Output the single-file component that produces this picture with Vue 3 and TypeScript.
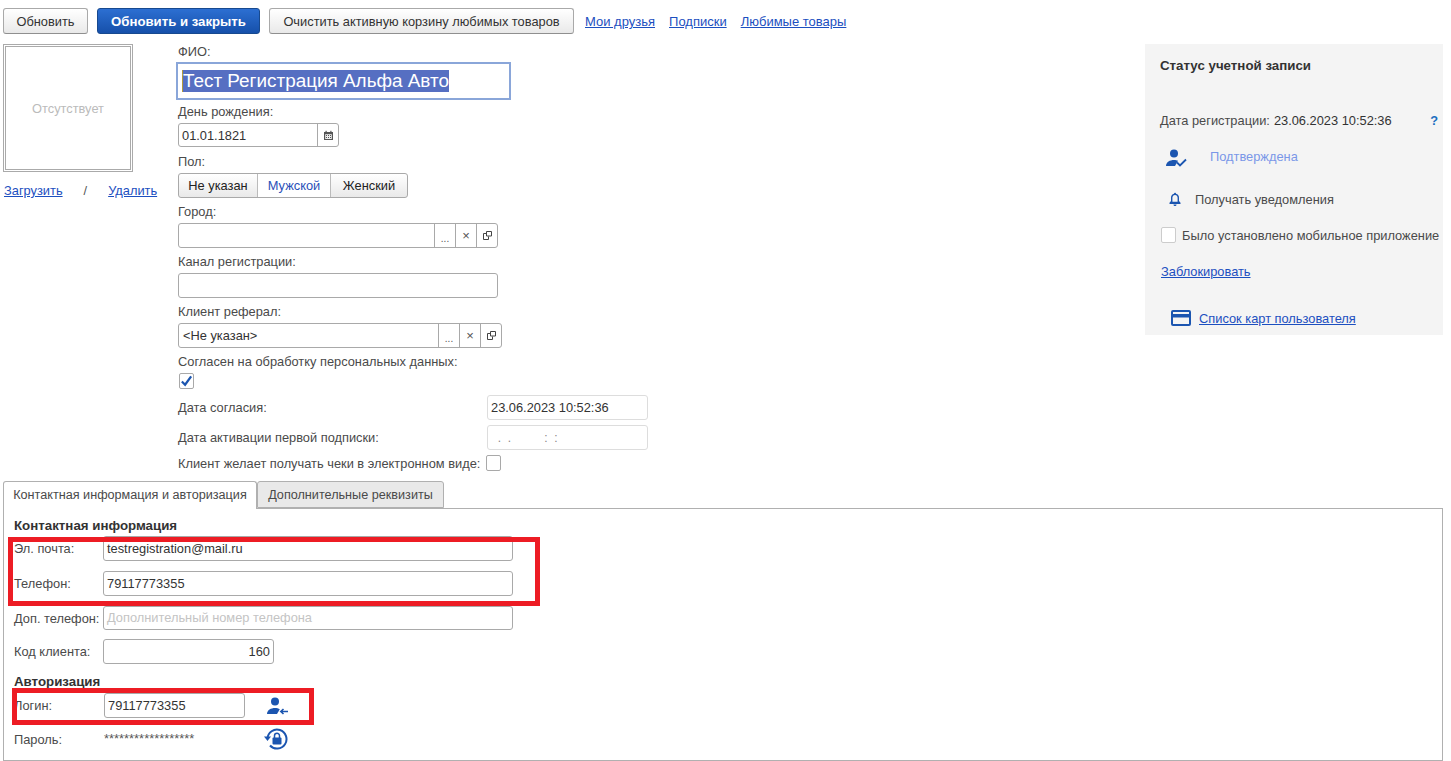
<script setup lang="ts">
const toolbarLinks: string[] = ['Мои друзья', 'Подписки', 'Любимые товары']
</script>

<template>
  <div class="page">
    <div class="toolbar">
      <button class="btn btn-plain">Обновить</button>
      <button class="btn btn-primary">Обновить и закрыть</button>
      <button class="btn btn-clear">Очистить активную корзину любимых товаров</button>
      <div class="toolbar-links">
        <a v-for="l in toolbarLinks" :key="l" class="link">{{ l }}</a>
      </div>
    </div>

    <div class="main">
      <div class="photo-col">
        <div class="photo"><span>Отсутствует</span></div>
        <div class="photo-links">
          <a class="link">Загрузить</a>
          <span class="slash">/</span>
          <a class="link">Удалить</a>
        </div>
      </div>

      <div class="form-col">
        <div class="lbl lbl-first">ФИО:</div>
        <div class="fio"><span class="fio-sel">Тест Регистрация Альфа Авто</span></div>
        <div class="lbl lbl-bd">День рождения:</div>
        <div class="ctl ctl-date">
          <span class="ctl-text">01.01.1821</span>
          <span class="ctl-btn">
            <svg width="11" height="11" viewBox="0 0 11 11">
              <rect x="1" y="2" width="9" height="8" fill="#555" />
              <rect x="2.2" y="4.2" width="6.6" height="4.8" fill="#eee" />
              <rect x="2.5" y="0.8" width="1.2" height="2" fill="#555" />
              <rect x="7.3" y="0.8" width="1.2" height="2" fill="#555" />
              <path d="M3 5h1v1H3zM5 5h1v1H5zM7 5h1v1H7zM3 7h1v1H3zM5 7h1v1H5zM7 7h1v1H7z" fill="#555" />
            </svg>
          </span>
        </div>
        <div class="lbl lbl-sex">Пол:</div>
        <div class="segment">
          <span class="seg seg-a">Не указан</span>
          <span class="seg seg-b">Мужской</span>
          <span class="seg seg-c">Женский</span>
        </div>
        <div class="lbl">Город:</div>
        <div class="ctl ctl-w320">
          <span class="ctl-text"></span>
          <span class="ctl-btn dots">...</span>
          <span class="ctl-btn cross">×</span>
          <span class="ctl-btn">
            <svg width="9" height="9" viewBox="0 0 9 9" fill="none" stroke="#444"><path d="M3.500 .5h5v4.500h-5z" /><path d="M3 2.500H.5v6h5V5.500" /></svg>
          </span>
        </div>
        <div class="lbl">Канал регистрации:</div>
        <div class="ctl ctl-w320"></div>
        <div class="lbl">Клиент реферал:</div>
        <div class="ctl ctl-w324">
          <span class="ctl-text ctl-text-tight">&lt;Не указан&gt;</span>
          <span class="ctl-btn dots">...</span>
          <span class="ctl-btn cross">×</span>
          <span class="ctl-btn">
            <svg width="9" height="9" viewBox="0 0 9 9" fill="none" stroke="#444"><path d="M3.500 .5h5v4.500h-5z" /><path d="M3 2.500H.5v6h5V5.500" /></svg>
          </span>
        </div>
        <div class="lbl">Согласен на обработку персональных данных:</div>
        <div class="check check-on">
          <svg width="14" height="14" viewBox="0 0 14 14"><path d="M2 7.500L5.500 11 12 2" fill="none" stroke="#1b55b0" stroke-width="2.400" /></svg>
        </div>
        <div class="row row-consent">
          <span class="row-lbl">Дата согласия:</span>
          <div class="ctl ctl-soft"><span class="ctl-text">23.06.2023 10:52:36</span></div>
        </div>
        <div class="row row-activation">
          <span class="row-lbl">Дата активации первой подписки:</span>
          <div class="ctl ctl-soft"><span class="ctl-text ctl-mask">&nbsp;&nbsp;.&nbsp;&nbsp;.&nbsp;&nbsp;&nbsp;&nbsp;&nbsp;&nbsp;&nbsp;&nbsp;&nbsp;&nbsp;:&nbsp;&nbsp;:</span></div>
        </div>
        <div class="row-receipt">
          <span>Клиент желает получать чеки в электронном виде:</span>
          <div class="check"></div>
        </div>
      </div>

      <aside class="status">
        <div class="status-title">Статус учетной записи</div>
        <div class="status-date">
          <span class="status-date-lbl">Дата регистрации:</span>
          <span class="status-date-val">23.06.2023 10:52:36</span>
          <span class="help">?</span>
        </div>
        <div class="status-confirm">
          <svg class="ic-user" width="21" height="18" viewBox="0 0 21 18">
            <circle cx="8" cy="4.500" r="4" fill="#1b55b0" />
            <path d="M0 17c0-4 4-6 8-6 1.500 0 3 .3 4 .8L9 17z" fill="#1b55b0" />
            <path d="M11 13.500l3 3 6-6" fill="none" stroke="#1b55b0" stroke-width="1.800" />
          </svg>
          <span class="confirm-text">Подтверждена</span>
        </div>
        <div class="status-notify">
          <svg width="14" height="14" viewBox="0 0 14 14">
            <path d="M7 .8c.6 0 1 .4 1 .9 2 .5 3 2 3 4v3.300l1.500 1.800V12h-11v-1.200L3 9V5.700c0-2 1-3.500 3-4 0-.5.4-.9 1-.9z" fill="#1b55b0" />
            <path d="M4.400 9.800V5.800c0-1.700 1.100-2.900 2.600-2.900s2.600 1.200 2.600 2.900v4z" fill="#f4f4f4" />
            <path d="M5.500 12.500h3c0 1-.7 1.500-1.500 1.500s-1.500-.5-1.500-1.500z" fill="#1b55b0" />
          </svg>
          <span>Получать уведомления</span>
        </div>
        <div class="status-mobile">
          <div class="check check-light"></div>
          <span>Было установлено мобильное приложение</span>
        </div>
        <a class="link status-block">Заблокировать</a>
        <div class="status-cards">
          <svg width="20" height="16" viewBox="0 0 20 16">
            <rect width="20" height="16" rx="2" fill="#1b55b0" />
            <rect x="2" y="2" width="16" height="2" fill="#f4f4f4" />
            <rect x="2" y="7.500" width="16" height="6.500" fill="#f4f4f4" />
          </svg>
          <a class="link">Список карт пользователя</a>
        </div>
      </aside>
    </div>

    <div class="tabs">
      <div class="tab tab-active">Контактная информация и авторизация</div>
      <div class="tab tab-idle">Дополнительные реквизиты</div>
    </div>
    <div class="panel">
      <div class="section-title">Контактная информация</div>
      <div class="p-row p-mail">
        <span class="p-lbl">Эл. почта:</span>
        <div class="ctl p-wide"><span class="ctl-text">testregistration@mail.ru</span></div>
      </div>
      <div class="p-row p-phone">
        <span class="p-lbl">Телефон:</span>
        <div class="ctl p-wide"><span class="ctl-text">79117773355</span></div>
      </div>
      <div class="p-row p-extra">
        <span class="p-lbl">Доп. телефон:</span>
        <div class="ctl p-wide ctl-extra"><span class="ctl-text placeholder">Дополнительный номер телефона</span></div>
      </div>
      <div class="p-row p-code">
        <span class="p-lbl">Код клиента:</span>
        <div class="ctl p-code-ctl"><span class="ctl-text code-val">160</span></div>
      </div>
      <div class="section-title section-auth">Авторизация</div>
      <div class="p-row p-login">
        <span class="p-lbl p-lbl-login">Логин:</span>
        <div class="ctl p-login-ctl"><span class="ctl-text">79117773355</span></div>
        <svg class="ic-login" width="22" height="18" viewBox="0 0 22 18">
          <circle cx="8" cy="4.500" r="4" fill="#1b55b0" />
          <path d="M0 17c0-4 4-6 8-6 1.800 0 3.500.4 4.800 1.200L10 17z" fill="#1b55b0" />
          <path d="M21 14.500h-7M16.500 12l-2.700 2.500 2.700 2.500" fill="none" stroke="#1b55b0" stroke-width="1.600" />
        </svg>
      </div>
      <div class="p-row p-pass">
        <span class="p-lbl">Пароль:</span>
        <span class="stars">******************</span>
        <svg class="ic-pass" width="24" height="22" viewBox="0 0 24 22">
          <path d="M3.500 10.500A9.500 9.500 0 1 1 6 17.500" fill="none" stroke="#1b55b0" stroke-width="2" />
          <path d="M0 8.500h7L3.500 13z" fill="#1b55b0" />
          <rect x="8.500" y="9.500" width="9" height="7" rx="1" fill="#1b55b0" />
          <path d="M10.500 10V7.800a2.500 2.500 0 0 1 5 0V10" fill="none" stroke="#1b55b0" stroke-width="1.500" />
        </svg>
      </div>
      <div class="annot annot-a"></div>
      <div class="annot annot-b"></div>
    </div>
  </div>
</template>

<style>
html, body { margin: 0; background: #fff; }
</style>

<style scoped>
.page { width: 1451px; height: 761px; overflow: hidden; font-family: "Liberation Sans", Arial, sans-serif; font-size: 12.83px; color: #4a4a4a; box-sizing: border-box; position: relative; }
.toolbar { display: flex; align-items: center; height: 26px; margin-top: 8px; padding-left: 3px; }
.btn { font: inherit; height: 26px; box-sizing: border-box; border: 1px solid #a9a9a9; border-bottom-color: #8f8f8f; border-radius: 3px; background: linear-gradient(#fff, #e9e9e9); color: #333; padding: 1px 0 0; margin-right: 9px; }
.btn-plain { width: 85px; }
.btn-primary { width: 163px; background: linear-gradient(#2c6fd2, #1650aa); border-color: #17498f; color: #fff; font-weight: 700; font-size: 13.2px; }
.btn-clear { width: 305px; margin-right: 11px; }
.toolbar-links { display: flex; gap: 14px; margin-top: 1px; font-size: 13px; }
.link { color: #1c4fc0; text-decoration: underline; cursor: pointer; }

.main { display: flex; margin-top: 10px; height: 437px; }
.photo-col { width: 173px; flex: none; padding-left: 3px; box-sizing: border-box; }
.photo { width: 130px; height: 128px; box-sizing: border-box; border: 1px solid #aaa; outline: 1px solid #aaa; outline-offset: -3px; display: flex; align-items: center; justify-content: center; color: #bbb; }
.photo-links { display: flex; margin-top: 12px; margin-left: 1px; width: 154px; line-height: 14px; }
.slash { margin-left: 21px; margin-right: 21px; color: #555; }

.form-col { width: 520px; flex: none; }
.lbl { height: 22px; line-height: 22px; margin-top: 3px; margin-left: 5px; }
.lbl-first { height: 18px; line-height: 16px; margin-top: 0; margin-left: 5px; }
.lbl-bd { height: 23px; margin-top: 0; line-height: 24px; }
.lbl-sex { height: 23px; line-height: 24px; }
.fio { width: 335px; height: 38px; margin-left: 3px; box-sizing: border-box; border: 2px solid #8aa6d9; display: flex; align-items: center; padding-left: 4px; }
.fio-sel { background: #566fc2; color: #fff; font-size: 18.9px; line-height: 22px; border-left: 1px solid #b49a3c; }
.ctl { display: flex; box-sizing: border-box; height: 25px; margin-left: 5px; border: 1px solid #a9a9a9; border-radius: 3px; background: #fff; color: #333; }
.ctl-date { width: 161px; height: 24px; }
.ctl-w320 { width: 320px; }
.ctl-w324 { width: 324px; }
.ctl-text { flex: 1; padding-left: 3px; line-height: 24px; white-space: nowrap; }
.ctl-text-tight { padding-left: 4px; }
.ctl-btn { width: 21px; flex: none; box-sizing: border-box; border-left: 1px solid #a9a9a9; display: flex; align-items: center; justify-content: center; color: #555; }
.dots { padding-top: 6px; font-size: 10px; }
.cross { font-size: 13px; }
.segment { display: flex; width: 230px; height: 25px; margin-left: 5px; box-sizing: border-box; border: 1px solid #a9a9a9; border-radius: 3px; background: linear-gradient(#fff, #e9e9e9); line-height: 23px; }
.seg { box-sizing: border-box; text-align: center; color: #222; }
.seg-a { width: 78px; }
.seg-b { width: 74px; background: #fff; color: #2a50b8; border-left: 1px solid #bbb; border-right: 1px solid #bbb; }
.seg-c { width: 76px; }
.check { width: 15px; height: 16px; flex: none; box-sizing: border-box; border: 1px solid #a9a9a9; border-radius: 2px; background: #fff; }
.check-on { margin-left: 6px; display: flex; align-items: center; justify-content: center; }
.row { display: flex; align-items: center; justify-content: space-between; width: 470px; height: 25px; margin-left: 3px; padding-left: 2px; }
.row .ctl { width: 161px; margin-left: 0; }
.ctl-soft { border-color: #ddd; }
.row-consent { margin-top: 6px; }
.row-activation { margin-top: 5px; }
.ctl-mask { color: #888; font-size: 12px; }
.row-receipt { display: flex; align-items: center; gap: 6px; margin-top: 5px; margin-left: 5px; white-space: nowrap; }

.status { margin-left: auto; margin-right: 8px; width: 298px; height: 291px; background: #f4f4f4; box-sizing: border-box; padding: 15px 0 0 15px; position: relative; flex: none; }
.status-title { font-weight: 700; color: #333; line-height: 14px; font-size: 13.3px; }
.status-date { display: flex; margin-top: 41px; line-height: 14px; }
.status-date-val { margin-left: 4px; color: #333; }
.help { margin-left: auto; margin-right: 5px; color: #1a6fc0; font-weight: 700; }
.status-confirm { display: flex; align-items: center; margin-top: 20px; margin-left: 6px; height: 20px; }
.confirm-text { margin-left: 23px; margin-top: -3px; color: #7a97e8; }
.status-notify { display: flex; align-items: center; margin-top: 24px; margin-left: 8px; height: 14px; }
.status-notify span { margin-left: 13px; }
.status-mobile { display: flex; align-items: center; margin-top: 21px; margin-left: 1px; height: 16px; white-space: nowrap; }
.check-light { margin-right: 6px; border-color: #ccc; }
.status-block { display: block; margin-top: 22px; margin-left: 1px; line-height: 14px; }
.status-cards { display: flex; align-items: center; gap: 8px; margin-top: 31px; margin-left: 11px; height: 16px; }

.tabs { display: flex; height: 27px; padding-left: 3px; position: relative; z-index: 1; font-size: 12.65px; }
.tab { box-sizing: border-box; height: 28px; border: 1px solid #b0b0b0; border-radius: 3px 3px 0 0; line-height: 26px; text-align: center; }
.tab-active { width: 254px; background: #fff; border-bottom: none; }
.tab-idle { width: 187px; background: #e9e9e9; height: 27px; }
.panel { position: relative; width: 1440px; height: 253px; margin-left: 3px; box-sizing: border-box; border: 1px solid #b0b0b0; padding-left: 10px; }
.section-title { font-weight: 700; color: #333; margin-top: 9px; line-height: 16px; font-size: 13.3px; }
.p-row { display: flex; align-items: center; height: 25px; }
.p-lbl { width: 89px; flex: none; white-space: nowrap; }
.p-wide { width: 410px; margin-left: 0; }
.p-mail { margin-top: 2px; }
.p-phone { margin-top: 10px; }
.p-extra { margin-top: 10px; height: 24px; }
.ctl-extra { height: 24px; }
.ctl-extra .ctl-text { line-height: 22px; }
.placeholder { color: #c4c4c4; }
.p-code { margin-top: 9px; }
.p-code-ctl { width: 171px; margin-left: 0; }
.code-val { text-align: right; padding-right: 3px; }
.section-auth { margin-top: 10px; }
.p-login { margin-top: 3px; }
.p-lbl-login { width: 90px; }
.p-login-ctl { width: 141px; margin-left: 0; }
.ic-login { margin-left: 22px; }
.p-pass { margin-top: 9px; }
.stars { width: 160px; flex: none; color: #555; font-size: 12.9px; margin-left: 1px; margin-top: -2px; }
.ic-pass { margin-top: -2px; }
.annot { position: absolute; box-sizing: border-box; border: 5px solid #ed1c24; pointer-events: none; }
.annot-a { left: 4px; top: 28px; width: 532px; height: 69px; }
.annot-b { left: 8px; top: 179px; width: 302px; height: 37px; }
</style>
